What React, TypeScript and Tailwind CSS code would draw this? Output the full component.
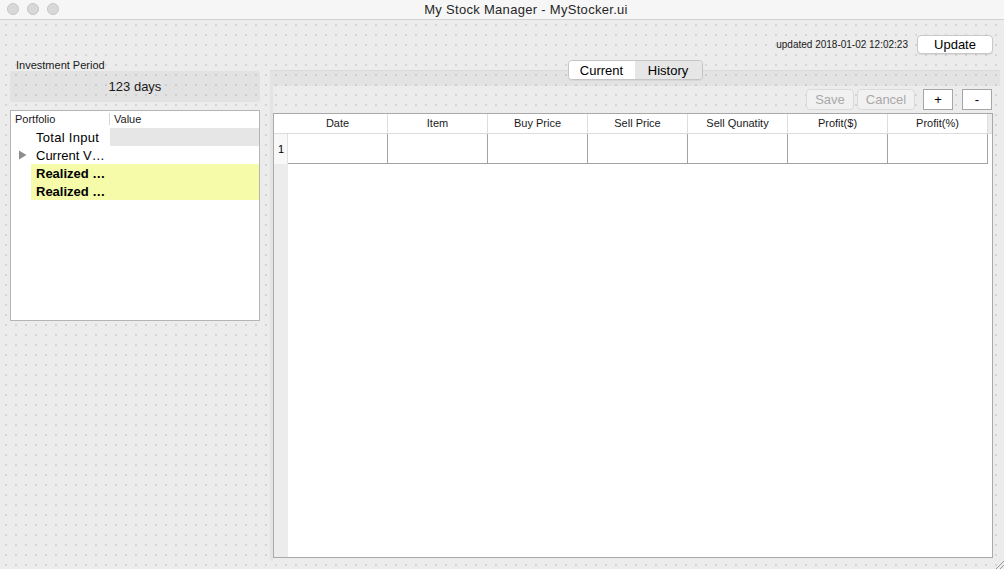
import React from "react";

function Tri() {
  return (
    <svg width="9" height="10" viewBox="0 0 9 10" className="block">
      <polygon points="1,0.5 8.5,5 1,9.5" fill="#8e8e8e" />
    </svg>
  );
}

export default function App() {
  const cols = ["Date", "Item", "Buy Price", "Sell Price", "Sell Qunatity", "Profit($)", "Profit(%)"];
  return (
    <div className="w-[1004px] h-[569px] flex flex-col overflow-hidden relative bg-[#ececec] text-black font-['Liberation_Sans',Arial,sans-serif]">
      {/* title bar */}
      <div className="h-[20px] shrink-0 bg-[#f6f6f6] border-b border-[#d2d2d2] relative flex items-center justify-center">
        <div className="absolute left-[7px] top-[3px] flex gap-[8px]">
          <div className="w-[12px] h-[12px] rounded-full bg-[#d8d8d8] border border-[#c6c6c6]" />
          <div className="w-[12px] h-[12px] rounded-full bg-[#d8d8d8] border border-[#c6c6c6]" />
          <div className="w-[12px] h-[12px] rounded-full bg-[#d8d8d8] border border-[#c6c6c6]" />
        </div>
        <span className="ml-[48px] text-[13px] tracking-[0.3px] leading-none text-[#262626]">My Stock Manager - MyStocker.ui</span>
      </div>

      {/* body */}
      <div className="flex-1 flex flex-col pt-[15px] bg-[radial-gradient(circle,#b4b4b4_0.4px,transparent_0.9px)] bg-size-[10px_10px] bg-position-[1px_0px]">
        <div className="h-[19px] flex items-center justify-end pr-[11px]">
          <span className="text-[10px] leading-none mr-[9px] text-[#1a1a1a]">updated 2018-01-02 12:02:23</span>
          <div className="w-[76px] h-[19px] bg-white rounded-[4px] border border-[#c8c8c8] shadow-[0_1px_1px_rgba(0,0,0,0.08)] text-[13px] leading-none flex items-center justify-center">
            Update
          </div>
        </div>

        <div className="flex mt-[6px] ml-[10px] gap-[10px]">
          {/* left column */}
          <div className="w-[250px] flex flex-col">
            <div className="h-[11px] text-[11px] leading-[10px] pl-[6px] text-[#1a1a1a]">Investment Period</div>
            <div className="h-[31px] bg-[rgba(0,0,0,0.04)] rounded-[2px] flex items-center justify-center text-[13px] text-[#1a1a1a]">
              123 days
            </div>
            <div className="mt-[8px] h-[211px] border border-[#b4b4b4] bg-white flex flex-col">
              <div className="h-[16px] flex items-center text-[11px] text-[#1a1a1a]">
                <div className="w-[99px] pl-[4px] h-[12px] leading-[12px] border-r border-[#d6d6d6]">Portfolio</div>
                <div className="pl-[4px] leading-[12px]">Value</div>
              </div>
              <div className="h-[18px] mt-[1px] flex text-[13px] leading-[19px]">
                <div className="w-[20px]" />
                <div className="w-[79px] pl-[5px] tracking-[0.3px]">Total Input</div>
                <div className="flex-1 bg-[#e6e6e6]" />
              </div>
              <div className="h-[18px] flex text-[13px] leading-[19px]">
                <div className="w-[20px] flex items-center pl-[7px]">
                  <Tri />
                </div>
                <div className="w-[79px] pl-[5px]">Current V…</div>
                <div className="flex-1" />
              </div>
              <div className="h-[18px] flex text-[13px] leading-[19px] font-bold">
                <div className="w-[20px]" />
                <div className="flex-1 bg-[#f5fba8] pl-[5px]">Realized …</div>
              </div>
              <div className="h-[18px] flex text-[13px] leading-[19px] font-bold">
                <div className="w-[20px]" />
                <div className="flex-1 bg-[#f5fba8] pl-[5px]">Realized …</div>
              </div>
            </div>
          </div>

          {/* right column: tab widget */}
          <div className="w-[730px] flex flex-col">
            <div className="h-[20px] flex justify-center relative z-10">
              <div className="flex border border-[#c4c4c4] rounded-[4px] overflow-hidden shadow-[0_1px_1px_rgba(0,0,0,0.06)] text-[13px] leading-none">
                <div className="w-[66px] bg-white flex items-center justify-center">Current</div>
                <div className="w-[67px] bg-[#e6e6e6] flex items-center justify-center">History</div>
              </div>
            </div>
            <div className="-mt-[10px] h-[491px] flex flex-col">
              <div className="h-[16px] bg-[rgba(0,0,0,0.035)] border-t border-[#d9d9d9]" />
              <div className="flex-1 flex">
                <div className="w-[3px] bg-[rgba(0,0,0,0.035)]" />
                <div className="flex-1 flex flex-col pt-[3px] pr-[7px] pb-[3px]">
                  <div className="h-[21px] flex justify-end items-center pr-[1px] text-[13px] leading-none">
                    <div className="w-[48px] h-[21px] rounded-[4px] border border-[#dadada] bg-[#f1f1f1] text-[#a9a9a9] flex items-center justify-center">Save</div>
                    <div className="ml-[3px] w-[58px] h-[21px] rounded-[4px] border border-[#dadada] bg-[#f1f1f1] text-[#a9a9a9] flex items-center justify-center">Cancel</div>
                    <div className="ml-[8px] w-[30px] h-[21px] border border-[#a6a6a6] bg-white flex items-center justify-center">+</div>
                    <div className="ml-[9px] w-[30px] h-[21px] border border-[#a6a6a6] bg-white flex items-center justify-center">-</div>
                  </div>
                  <div className="mt-[3px] flex-1 border border-[#a9a9a9] flex flex-col bg-white">
                    <div className="h-[20px] flex border-b border-[#dcdcdc] text-[11px] text-[#1a1a1a]">
                      <div className="w-[14px] bg-white" />
                      {cols.map((c) => (
                        <div key={c} className="w-[100px] bg-white border-r border-[#dedede] flex items-center justify-center leading-none">
                          {c}
                        </div>
                      ))}
                      <div className="flex-1 bg-[#ececec]" />
                    </div>
                    <div className="h-[30px] flex">
                      <div className="w-[14px] bg-[#f8f8f8] border-r border-[#e2e2e2] text-[11px] flex items-center pl-[4px]">1</div>
                      {cols.map((c) => (
                        <div key={c} className="w-[100px] border-r border-b border-[#a3a3a3]" />
                      ))}
                      <div className="flex-1" />
                    </div>
                    <div className="flex-1 flex">
                      <div className="w-[14px] bg-[#ececec]" />
                      <div className="flex-1 bg-white" />
                    </div>
                  </div>
                </div>
              </div>
            </div>
          </div>
        </div>
      </div>

      {/* resize grip */}
      <svg className="absolute right-0 bottom-0" width="10" height="10" viewBox="0 0 10 10">
        <line x1="2" y1="10" x2="10" y2="2" stroke="#9a9a9a" strokeWidth="1" />
        <line x1="6" y1="10" x2="10" y2="6" stroke="#9a9a9a" strokeWidth="1" />
      </svg>
    </div>
  );
}
